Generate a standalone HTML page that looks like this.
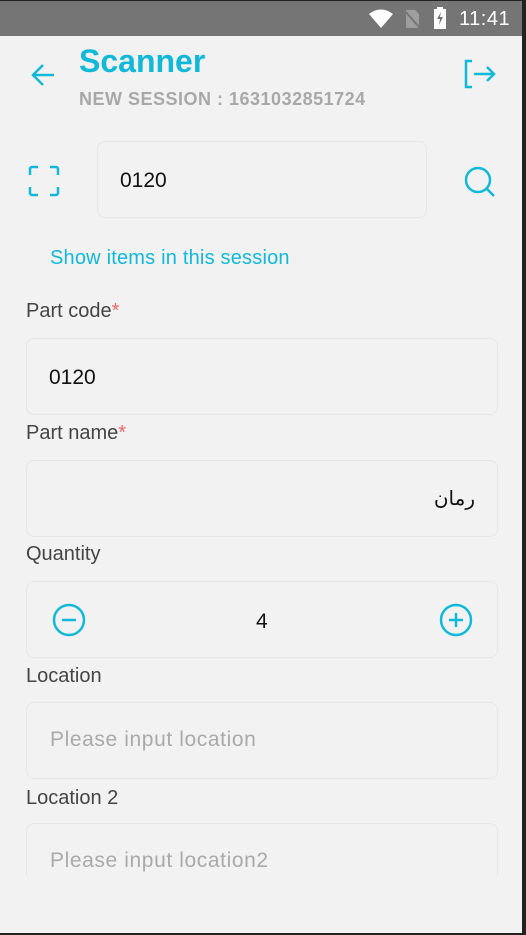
<!DOCTYPE html>
<html><head><meta charset="utf-8"><style>
*{margin:0;padding:0;box-sizing:border-box}
body{width:526px;height:935px;background:#222;position:relative;overflow:hidden;font-family:"Liberation Sans","Noto Sans CJK SC",sans-serif}
.scr{position:absolute;left:0;top:1px;width:522px;height:932px;background:#f2f2f2;overflow:hidden}
.sb{position:absolute;left:0;top:0;width:522px;height:35px;background:#757575;color:#fff}
.box{position:absolute;left:26px;width:472px;height:77px;border:1.5px solid #e6e6e6;border-radius:8px;background:#f2f2f2}
.lbl{position:absolute;left:26px;font-size:20px;color:#444}
.lbl b{color:#f06666;font-weight:normal}
.txt{position:absolute;font-size:21px;color:#111}
.ph{position:absolute;left:23px;top:25px;font-size:21px;color:#aaa;letter-spacing:0.6px}
</style></head><body><div class="scr">
<div class="sb">
<svg style="position:absolute;left:368px;top:8px" width="26" height="20" viewBox="0 0 26 20"><path d="M1 5 Q13 -4 25 5 L13 19 Z" fill="#fff"/></svg>
<svg style="position:absolute;left:403px;top:8px" width="18" height="20" viewBox="0 0 18 20"><path d="M3 1h9l4 4v14H3z" fill="#9e9e9e"/><path d="M1 1 17 19" stroke="#757575" stroke-width="2"/></svg>
<svg style="position:absolute;left:433px;top:5px" width="14" height="24" viewBox="0 0 14 24"><path d="M4 1h6v2h3v20H1V3h3z" fill="#fff"/><path d="M8 6 4 13h3l-1 6 4-8H7z" fill="#757575"/></svg>
<div style="position:absolute;left:459px;top:7px;font-size:20px;letter-spacing:0.5px">11:41</div>
</div>
<svg style="position:absolute;left:30px;top:61px" width="28" height="26" viewBox="0 0 28 26"><path d="M24 13H4M13 3 3 13l10 10" fill="none" stroke="#12b8d8" stroke-width="2.5"/></svg>
<div style="position:absolute;left:79px;top:42px;font-size:32px;font-weight:bold;color:#12b8d8">Scanner</div>
<div style="position:absolute;left:79px;top:88px;font-size:18px;font-weight:bold;color:#a8a8a8;letter-spacing:0.5px">NEW SESSION : 1631032851724</div>
<svg style="position:absolute;left:462px;top:58px" width="36" height="32" viewBox="0 0 36 32"><path d="M10 2H4v26h6M12 15h20M25 8l7 7-7 7" fill="none" stroke="#12b8d8" stroke-width="2.5"/></svg>
<svg style="position:absolute;left:28px;top:164px" width="32" height="32" viewBox="0 0 32 32"><path d="M2 10V4a2 2 0 0 1 2-2h6M22 2h6a2 2 0 0 1 2 2v6M30 22v6a2 2 0 0 1-2 2h-6M10 30H4a2 2 0 0 1-2-2v-6" fill="none" stroke="#12b8d8" stroke-width="2.5"/></svg>
<div class="box" style="left:97px;width:330px;top:140px"><div class="txt" style="left:22px;top:27px">0120</div></div>
<svg style="position:absolute;left:463px;top:164px" width="34" height="34" viewBox="0 0 34 34"><circle cx="15" cy="15" r="12" fill="none" stroke="#12b8d8" stroke-width="2.5"/><path d="M24 24l7 7" stroke="#12b8d8" stroke-width="2.5"/></svg>
<div style="position:absolute;left:50px;top:246px;font-size:20px;color:#12b8d8;letter-spacing:0.2px">Show items in this session</div>
<div class="lbl" style="top:299px">Part code<b>*</b></div>
<div class="box" style="top:337px"><div class="txt" style="left:22px;top:27px">0120</div></div>
<div class="lbl" style="top:421px">Part name<b>*</b></div>
<div class="box" style="top:459px"><div class="txt" style="right:22px;top:25px;font-family:'DejaVu Sans',sans-serif;font-size:20px">رمان</div></div>
<div class="lbl" style="top:542px">Quantity</div>
<div class="box" style="top:580px">
<svg style="position:absolute;left:24px;top:20px" width="36" height="36" viewBox="0 0 36 36"><circle cx="18" cy="18" r="15" fill="none" stroke="#12b8d8" stroke-width="2.5"/><path d="M11 18h14" stroke="#12b8d8" stroke-width="2.5"/></svg>
<div class="txt" style="left:229px;top:28px">4</div>
<svg style="position:absolute;left:411px;top:20px" width="36" height="36" viewBox="0 0 36 36"><circle cx="18" cy="18" r="15" fill="none" stroke="#12b8d8" stroke-width="2.5"/><path d="M11 18h14M18 11v14" stroke="#12b8d8" stroke-width="2.5"/></svg>
</div>
<div class="lbl" style="top:664px">Location</div>
<div class="box" style="top:701px"><div class="ph">Please input location</div></div>
<div class="lbl" style="top:786px">Location 2</div>
<div style="position:absolute;left:0;top:822px;width:522px;height:52px;overflow:hidden"><div class="box" style="top:0"><div class="ph">Please input location2</div></div></div>
</div></body></html>
